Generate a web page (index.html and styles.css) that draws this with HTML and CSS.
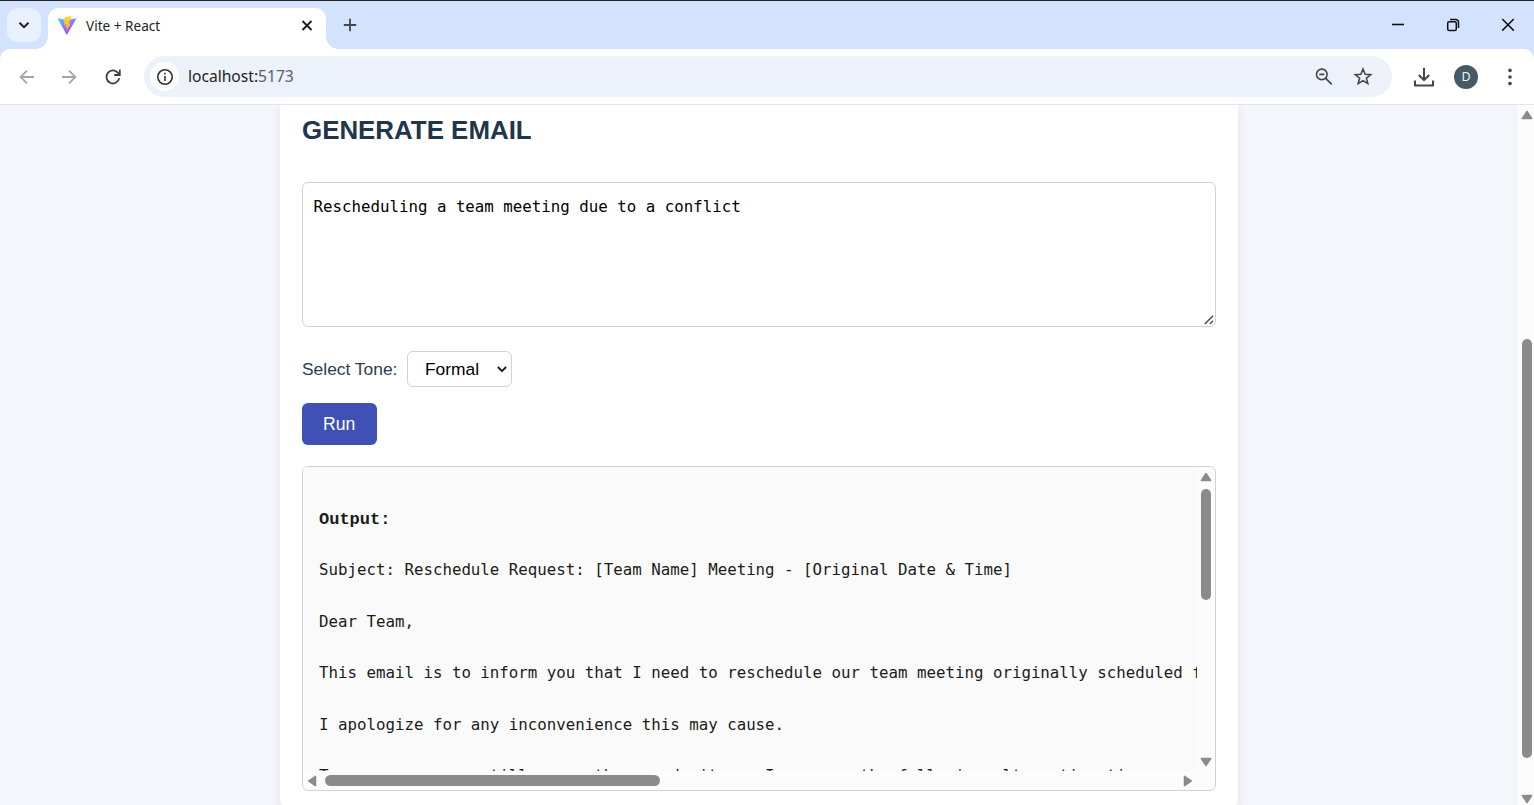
FILE: index.html
```html
<!DOCTYPE html>
<html lang="en">
<head>
<meta charset="utf-8">
<title>Vite + React</title>
<link rel="stylesheet" href="styles.css">
</head>
<body>
<div class="window">
  <header class="tabstrip">
    <button class="tab-search" aria-label="Search tabs"><svg width="12" height="8" viewBox="0 0 12 8"><path d="M1.5 1.7 6 6.1 10.5 1.7" fill="none" stroke="#1f1f1f" stroke-width="2"/></svg></button>
    <div class="tab">
      <svg class="logo" width="20" height="20" viewBox="0 0 20 20">
        <defs>
          <linearGradient id="vite" x1="0" y1="0" x2=".6" y2="1"><stop offset="0" stop-color="#41d1ff"/><stop offset="1" stop-color="#bd34fe"/></linearGradient>
          <linearGradient id="bolt" x1="0" y1="0" x2="0" y2="1"><stop offset="0" stop-color="#ffdd35"/><stop offset="1" stop-color="#ffa800"/></linearGradient>
        </defs>
        <path d="M.4 2.3 9.8 19 19.6 2.3 10 3.9Z" fill="url(#vite)"/>
        <path d="M14.2 0 7.5 1.3 7 8.7 9.1 8.3 8.4 11.3 10 11 9.2 15.7 13.8 7.3 11.7 7.7 12.8 4.3 14.2 4Z" fill="url(#bolt)"/>
      </svg>
      <span class="tab-title">Vite + React</span>
      <svg class="tab-close" width="12" height="12" viewBox="0 0 12 12"><path d="M1.5 1 10.5 10M10.5 1 1.5 10" stroke="#1f1f1f" stroke-width="1.9"/></svg>
    </div>
    <svg class="new-tab" width="14" height="14" viewBox="0 0 14 14"><path d="M7 .8V13.2M.8 7H13.2" stroke="#444746" stroke-width="1.8"/></svg>
    <div class="controls">
      <svg width="14" height="14" viewBox="0 0 14 14"><path d="M1 6.5H13" stroke="#111" stroke-width="1.6"/></svg>
      <svg width="14" height="14" viewBox="0 0 14 14"><rect x="1.7" y="3.7" width="8.6" height="8.8" rx="1.6" fill="none" stroke="#111" stroke-width="1.5"/><path d="M4 1.4H9.8A2.7 2.7 0 0 1 12.5 4.1V10" fill="none" stroke="#111" stroke-width="1.5"/></svg>
      <svg width="14" height="14" viewBox="0 0 14 14"><path d="M1.2 1 12.8 12.6M12.8 1 1.2 12.6" stroke="#111" stroke-width="1.5"/></svg>
    </div>
  </header>

  <nav class="toolbar">
    <svg class="nav-icon" width="16" height="16" viewBox="0 0 16 16"><path d="M15 8H2M8 1.6 1.6 8 8 14.4" fill="none" stroke="#a3a5a8" stroke-width="1.8"/></svg>
    <svg class="nav-icon" width="16" height="16" viewBox="0 0 16 16"><path d="M1 8H14M8 1.6 14.4 8 8 14.4" fill="none" stroke="#a3a5a8" stroke-width="1.8"/></svg>
    <svg class="nav-icon" width="18" height="18" viewBox="0 0 18 18"><path d="M15.3 10.2A6.5 6.5 0 1 1 14.3 5.3L15.8 7M15.8 1.6V7H10.3" fill="none" stroke="#3c4043" stroke-width="1.8"/></svg>
    <div class="address">
      <span class="site-info"><svg width="18" height="18" viewBox="0 0 18 18"><circle cx="9" cy="9" r="7.2" fill="none" stroke="#303134" stroke-width="1.6"/><path d="M9 8V13M9 4.8V6.5" stroke="#303134" stroke-width="1.6"/></svg></span>
      <span class="url">localhost:<span class="port">5173</span></span>
      <svg class="zoom-icon" width="18" height="18" viewBox="0 0 18 18"><circle cx="6.8" cy="6.4" r="5.3" fill="none" stroke="#444746" stroke-width="1.6"/><path d="M4.3 6.4H9.3M10.5 10.1 16.7 16.3" stroke="#444746" stroke-width="1.7"/></svg>
      <svg class="star" width="20" height="20" viewBox="0 0 20 20"><path d="M10 2 12.1 7.2 17.7 7.6 13.4 11.2 14.8 16.6 10 13.6 5.2 16.6 6.6 11.2 2.3 7.6 7.9 7.2Z" fill="none" stroke="#444746" stroke-width="1.6"/></svg>
    </div>
    <svg class="download" width="20" height="20" viewBox="0 0 20 20"><path d="M10 .8V13M4.8 8 10 13.2 15.2 8M1 13.5V18.4H19V13.5" fill="none" stroke="#444746" stroke-width="2"/></svg>
    <span class="avatar">D</span>
    <svg class="more" width="6" height="18" viewBox="0 0 6 18"><g fill="#444746"><circle cx="3" cy="2.4" r="1.8"/><circle cx="3" cy="9" r="1.8"/><circle cx="3" cy="15.6" r="1.8"/></g></svg>
  </nav>

  <div class="viewport">
    <main class="page">
      <section class="card">
        <h2 class="heading">GENERATE EMAIL</h2>
        <div class="prompt">Rescheduling a team meeting due to a conflict
          <svg class="grip" width="10" height="10" viewBox="0 0 10 10"><path d="M.8 9 9 .8M5.8 9 9 5.8" stroke="#444" stroke-width="1.3"/></svg>
        </div>
        <div class="tone">
          <span class="tone-label">Select Tone:</span>
          <span class="select">Formal<svg width="10" height="7" viewBox="0 0 10 7"><path d="M.9 1 5 5.1 9.1 1" fill="none" stroke="#111" stroke-width="1.8"/></svg></span>
        </div>
        <button class="run">Run</button>
        <div class="output">
          <div class="output-text">
            <div class="output-title">Output:</div>
            <p>Subject: Reschedule Request: [Team Name] Meeting - [Original Date &amp; Time]</p>
            <p>Dear Team,</p>
            <p>This email is to inform you that I need to reschedule our team meeting originally scheduled for</p>
            <p>I apologize for any inconvenience this may cause.</p>
            <p>To ensure we can still cover the agenda items, I propose the following alternative times:</p>
          </div>
          <div class="vbar">
            <svg width="12" height="10" viewBox="0 0 12 10"><path d="M6 1.5 10.7 8.5H1.3Z"/></svg>
            <i class="thumb-y"></i>
            <svg class="end" width="12" height="10" viewBox="0 0 12 10"><path d="M6 8.5 1.3 1.5H10.7Z"/></svg>
          </div>
          <div class="hbar">
            <svg width="10" height="12" viewBox="0 0 10 12"><path d="M1.5 6 8.5 1.3V10.7Z"/></svg>
            <i class="thumb-x"></i>
            <svg class="end" width="10" height="12" viewBox="0 0 10 12"><path d="M8.5 6 1.5 10.7V1.3Z"/></svg>
          </div>
        </div>
      </section>
    </main>
    <div class="page-bar">
      <svg width="12" height="10" viewBox="0 0 12 10"><path d="M6 1.5 10.7 8.5H1.3Z"/></svg>
      <i class="page-thumb"></i>
      <svg class="end" width="12" height="10" viewBox="0 0 12 10"><path d="M6 8.5 1.3 1.5H10.7Z"/></svg>
    </div>
  </div>
</div>
</body>
</html>
```
FILE: styles.css
```css
* { box-sizing: border-box; }
body { margin: 0; overflow: hidden; background: #d3e3fd; }
svg { display: block; flex: none; }
button { border: 0; padding: 0; }
.window { display: flex; flex-direction: column; height: 805px; border-top: 1px solid #202124; font-family: "Noto Sans", "Open Sans", sans-serif; }

.tabstrip { display: flex; height: 48px; flex: none; padding: 7px 0 0 7px; }
.tab-search { width: 34px; height: 34px; border-radius: 11px; background: #e9f1fe; display: flex; align-items: center; justify-content: center; }
.tab { position: relative; display: flex; align-items: center; width: 278px; height: 41px; margin-left: 7px; padding: 0 13px 5px 9px; border-radius: 11px 11px 0 0; background: #fff; }
.tab::before, .tab::after { content: ""; position: absolute; bottom: 0; width: 12px; height: 12px; }
.tab::before { left: -12px; background: radial-gradient(circle at 0 0, transparent 11.5px, #fff 12px); }
.tab::after { right: -12px; background: radial-gradient(circle at 100% 0, transparent 11.5px, #fff 12px); }
.tab-title { margin-left: 9px; font-size: 13.6px; line-height: 18px; color: #1f1f1f; white-space: nowrap; }
.tab-close { margin-left: auto; }
.new-tab { margin: 10px 0 0 17px; }
.controls { display: flex; gap: 41px; margin: 10px 19px 0 auto; }

.toolbar { display: flex; align-items: center; flex: none; height: 56px; padding: 0 21px 0 19px; background: #fff; border-bottom: 1px solid #e3e5e8; border-radius: 10px 10px 0 0; }
.nav-icon { margin-right: 26px; }
.nav-icon + .nav-icon + .nav-icon { margin-right: 22px; margin-left: 1px; }
.address { display: flex; align-items: center; flex: none; width: 1248px; height: 41px; border-radius: 21px; background: #ecf1fa; padding: 0 19px 0 6px; }
.site-info { display: flex; align-items: center; justify-content: center; width: 29px; height: 29px; border-radius: 50%; background: #fff; }
.url { margin-left: 9px; padding-bottom: 1px; font-size: 15.6px; line-height: 20px; color: #1f1f1f; }
.port { color: #5a5d61; }
.zoom-icon { margin-left: auto; }
.star { margin-left: 20px; }
.download { margin-left: 22px; }
.avatar { width: 24px; height: 24px; margin-left: 20px; border-radius: 50%; background: #455a64; color: #eef3f5; font-size: 12.5px; line-height: 24px; text-align: center; }
.more { margin-left: auto; }

.viewport { display: flex; flex: 1; min-height: 0; background: #f4f6fb; }
.page { flex: 1; overflow: hidden; padding-left: 280px; }
.card { width: 958px; height: 703px; padding: 0 22px 0 21.5px; background: #fff; border-radius: 0 0 9px 9px; box-shadow: 0 4px 12px rgba(0,0,0,.08); font-family: "Liberation Sans", Arial, sans-serif; }
.heading { margin: 0; padding: 9px 0 0 .5px; height: 77px; font-size: 25.9px; line-height: 32px; color: #20364b; white-space: nowrap; }
.prompt { position: relative; height: 145px; border: 1px solid #d2d2d2; border-radius: 6px; padding: 14px 11px; font: 15.78px/20px "DejaVu Sans Mono", monospace; color: #000; }
.grip { position: absolute; right: 1px; bottom: 1px; }
.tone { display: flex; align-items: center; height: 36px; margin-top: 24px; font-size: 17.4px; }
.tone-label { width: 105.5px; color: #2c3e50; padding-left: .5px; white-space: nowrap; }
.select { display: flex; align-items: center; justify-content: space-between; width: 105px; height: 36px; padding: 0 4px 0 17px; border: 1px solid #d2d2d2; border-radius: 6px; color: #000; }
.run { display: block; width: 75.5px; height: 42px; margin-top: 16px; border-radius: 6px; background: #3f51b5; color: #fff; font: 17.6px "Liberation Sans", Arial, sans-serif; }
.output { display: grid; grid-template: 304px 19px / 894.5px 18px; width: 914.5px; height: 325px; margin-top: 21px; border: 1px solid #d2d2d2; border-radius: 6px; background: #fcfcfc; overflow: hidden; }
.output-text { overflow: hidden; padding: 41px 0 0 16.5px; background: #fafafa; font: 15.77px/24px "DejaVu Sans Mono", monospace; color: #1b1b1b; white-space: nowrap; }
.output-title { font: bold 17px/24px "Courier New", "Liberation Mono", monospace; margin-bottom: 26px; }
.output-text p { margin: 0 0 27.6px; }
.vbar svg, .hbar svg, .page-bar svg { fill: #8b8b8b; stroke: #8b8b8b; stroke-width: 1.5; stroke-linejoin: round; }
.vbar { display: flex; flex-direction: column; align-items: center; padding: 5px 1px 4px 0; }
.thumb-y { width: 10px; height: 111px; margin-top: 7px; border-radius: 5px; background: #8b8b8b; }
.end { margin-top: auto; }
.hbar { display: flex; align-items: center; padding: 0 4px; }
.thumb-x { width: 335px; height: 11px; margin-left: 8px; border-radius: 6px; background: #8b8b8b; }
.hbar .end { margin: 0 0 0 auto; }
.page-bar { width: 16px; display: flex; flex-direction: column; align-items: center; padding: 5px 0 1px 2px; background: #fcfcfc; flex: none; }
.page-thumb { width: 10px; height: 419px; margin-top: 219px; border-radius: 5px; background: #8b8b8b; flex: none; }
```
